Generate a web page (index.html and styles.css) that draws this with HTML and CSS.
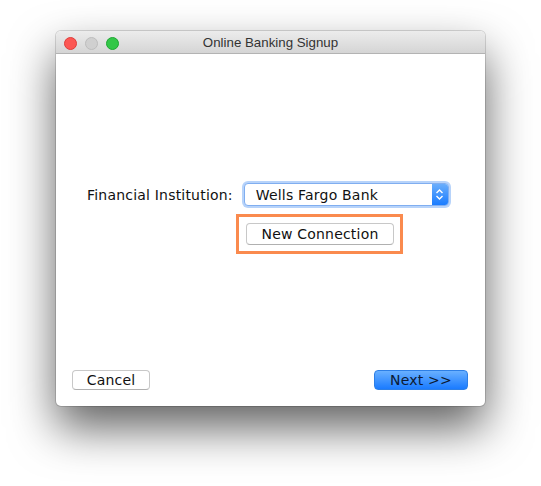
FILE: index.html
```html
<!DOCTYPE html>
<html lang="en">
<head>
  <meta charset="UTF-8" />
  <title>Online Banking Signup</title>
  <link rel="stylesheet" href="styles.css">
</head>
<body>
  <div class="window">
    <div class="titlebar">
      <div class="lights">
        <span class="light close"></span>
        <span class="light min"></span>
        <span class="light zoom"></span>
      </div>
      <div class="title">Online Banking Signup</div>
    </div>

    <div class="content">
      <div class="form-row">
        <label class="label">Financial Institution:</label>
        <div class="select">
          <span class="select-value">Wells Fargo Bank</span>
          <span class="select-arrow">
            <svg width="9" height="13" viewBox="0 0 9 13">
              <path d="M1.5 5 L4.5 2 L7.5 5 M1.5 8 L4.5 11 L7.5 8" fill="none" stroke="#fff" stroke-width="1.4" />
            </svg>
          </span>
        </div>
      </div>

      <div class="highlight">
        <button class="btn">New Connection</button>
      </div>

      <div class="footer">
        <button class="btn wide">Cancel</button>
        <button class="btn primary">Next &gt;&gt;</button>
      </div>
    </div>
  </div>
</body>
</html>
```

FILE: styles.css
```css
html {
  background: #fff;
}
body {
  margin: 0;
  padding: 31px 56px;
  min-height: 486px;
  box-sizing: border-box;
  background: #fff;
  font-family: "DejaVu Sans", Verdana, sans-serif;
  color: #111;
}
.window {
  width: 429px;
  height: 375px;
  border-radius: 5px;
  background: #fff;
  box-shadow: 0 0 0 1px rgba(0,0,0,0.14), 0 22px 46px rgba(0,0,0,0.62);
  display: flex;
  flex-direction: column;
  overflow: hidden;
}
.titlebar {
  height: 22px;
  flex: none;
  position: relative;
  background: linear-gradient(#ececec, #d5d5d5);
  border-bottom: 1px solid #b3b3b3;
  display: flex;
  align-items: center;
  justify-content: center;
}
.lights {
  position: absolute;
  left: 8px;
  top: 6px;
  display: flex;
  gap: 8px;
}
.light {
  width: 11px;
  height: 11px;
  border-radius: 50%;
  border: 0.5px solid rgba(0,0,0,0.15);
}
.light.close { background: #fc5753; border-color: #df3d3a; }
.light.min { background: #d0d0d0; border-color: #bdbdbd; }
.light.zoom { background: #33c748; border-color: #1ea732; }
.title {
  font-family: "Liberation Sans", Arial, sans-serif;
  font-size: 13.3px;
  color: #333;
}
.content {
  flex: 1;
  display: flex;
  flex-direction: column;
  padding: 129px 17px 16px 16px;
}
.form-row {
  display: flex;
  align-items: center;
  padding-left: 15px;
  gap: 11px;
}
.label {
  font-size: 14px;
  letter-spacing: 0.2px;
  padding-top: 1px;
}
.select {
  width: 203px;
  height: 21px;
  border: 1px solid #80aef0;
  border-radius: 4px;
  box-shadow: 0 0 0 2px #b7d3fa;
  display: flex;
  align-items: center;
  background: #fff;
  overflow: hidden;
}
.select-value {
  flex: 1;
  font-size: 14px;
  letter-spacing: 0.2px;
  padding-left: 11px;
}
.select-arrow {
  width: 16px;
  height: 100%;
  background: linear-gradient(#6aaefc, #1a7cff);
  display: flex;
  align-items: center;
  justify-content: center;
}
.highlight {
  margin: 8px 0 0 164px;
  width: 167px;
  height: 40px;
  box-sizing: border-box;
  border: 3px solid #fa8a4e;
  display: flex;
  align-items: center;
  padding-left: 7px;
}
.btn {
  font-family: "DejaVu Sans", Verdana, sans-serif;
  font-size: 14px;
  letter-spacing: 0.2px;
  color: #111;
  background: #fff;
  border: 1px solid #c8c8c8;
  border-bottom-color: #b0b0b0;
  border-radius: 4px;
  height: 22px;
  padding: 0;
  width: 148px;
  line-height: 18px;
}
.footer {
  margin-top: auto;
  display: flex;
  justify-content: space-between;
}
.btn.wide {
  width: 78px;
  height: 20px;
}
.btn.primary {
  width: 94px;
  height: 20px;
  color: #0c1a33;
  border-color: #2d7fe6;
  background: linear-gradient(#69b0ff, #1a7bff);
}
```
